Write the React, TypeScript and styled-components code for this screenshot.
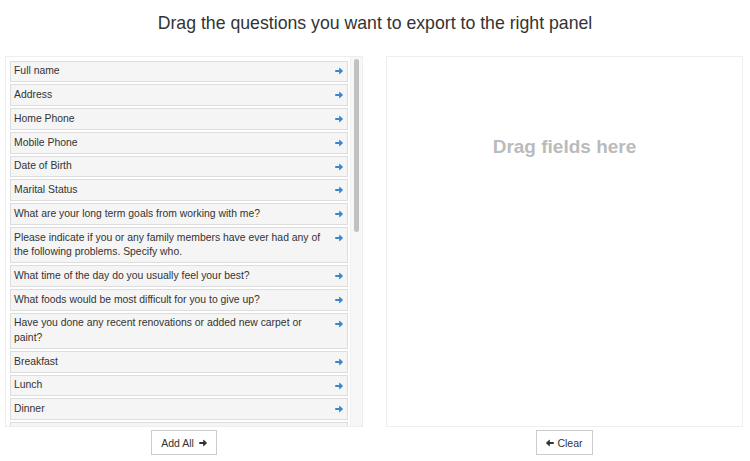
import styled, { createGlobalStyle } from 'styled-components';

const questions = [
	'Full name',
	'Address',
	'Home Phone',
	'Mobile Phone',
	'Date of Birth',
	'Marital Status',
	'What are your long term goals from working with me?',
	'Please indicate if you or any family members have ever had any of the following problems. Specify who.',
	'What time of the day do you usually feel your best?',
	'What foods would be most difficult for you to give up?',
	'Have you done any recent renovations or added new carpet or paint?',
	'Breakfast',
	'Lunch',
	'Dinner',
	'Snacks',
	'Beverages',
	'Do you smoke?',
	'How many hours do you sleep per night?',
	'Exercise routine',
	'Current medications',
	'Allergies',
];

function Arrow({ left = false }: { left?: boolean }) {
	return (
		<ArrowSvg viewBox="0 0 10 10" $left={left}>
			<path d="M0.3 3.7H5.2V1.2Q5.2 0.6 5.8 1L9.6 4.5Q10 5 9.6 5.5L5.8 9Q5.2 9.4 5.2 8.8V6.3H0.3Z" fill="currentColor" />
		</ArrowSvg>
	);
}

function App() {
	return (
		<>
			<GlobalStyle />
			<Page>
				<Title>Drag the questions you want to export to the right panel</Title>
				<Columns>
					<Column>
						<SourcePanel>
							<List>
								{questions.map((q) => (
									<Question key={q}>
										<span>{q}</span>
										<MoveIcon>
											<Arrow />
										</MoveIcon>
									</Question>
								))}
							</List>
							<ScrollTrack>
								<ScrollThumb />
							</ScrollTrack>
						</SourcePanel>
						<ActionButton $gap={5}>
							Add All <Arrow />
						</ActionButton>
					</Column>
					<Column>
						<DropPanel>
							<Placeholder>Drag fields here</Placeholder>
						</DropPanel>
						<ActionButton $gap={3}>
							<Arrow left /> Clear
						</ActionButton>
					</Column>
				</Columns>
			</Page>
		</>
	);
}

export default App;

const GlobalStyle = createGlobalStyle`
	body {
		margin: 0;
		background: #fff;
		font-family: "Liberation Sans", Arial, sans-serif;
		color: #333;
	}
`;

const Page = styled.div`
	width: 750px;
	height: 461px;
	overflow: hidden;
`;

const Title = styled.h1`
	margin: 0;
	height: 56px;
	padding-top: 12px;
	box-sizing: border-box;
	text-align: center;
	font-size: 17.7px;
	font-weight: normal;
	line-height: 22px;
	color: #333;
`;

const Columns = styled.div`
	display: grid;
	grid-template-columns: 358px 357px;
	gap: 23px;
	padding-left: 5px;
`;

const Column = styled.div`
	display: flex;
	flex-direction: column;
	align-items: center;
	gap: 3px;
`;

const SourcePanel = styled.div`
	display: flex;
	width: 358px;
	height: 371px;
	box-sizing: border-box;
	border: 1px solid #eee;
`;

const List = styled.div`
	flex: 1;
	overflow: hidden;
	padding: 3.5px 2px 3px 4px;
`;

const ScrollTrack = styled.div`
	flex: none;
	width: 12px;
	box-sizing: border-box;
	padding: 2px 3px;
	background: #f7f7f7;
	border-left: 1px solid #f0f0f0;
`;

const ScrollThumb = styled.div`
	height: 173px;
	border-radius: 4px;
	background: #c1c1c1;
`;

const Question = styled.div`
	display: flex;
	justify-content: space-between;
	align-items: flex-start;
	gap: 8px;
	padding: 2.7px 3px;
	margin-bottom: 2px;
	border: 1px solid #ddd;
	background: #f5f5f5;
	font-size: 10.4px;
	line-height: 14.4px;
	color: #333;
	cursor: move;
`;

const MoveIcon = styled.span`
	flex: none;
	display: flex;
	align-items: center;
	height: 14.4px;
	padding-right: 1px;
	color: #3a87d0;
`;

const ArrowSvg = styled.svg<{ $left: boolean }>`
	width: 8px;
	height: 8px;
	flex: none;
	transform: ${({ $left }) => ($left ? 'scaleX(-1)' : 'none')};
`;

const DropPanel = styled.div`
	width: 357px;
	height: 371px;
	box-sizing: border-box;
	border: 1px solid #eee;
	display: flex;
	justify-content: center;
	align-items: flex-start;
`;

const Placeholder = styled.div`
	margin-top: 79px;
	font-size: 19px;
	font-weight: bold;
	color: #bbb;
`;

const ActionButton = styled.button<{ $gap: number }>`
	display: inline-flex;
	align-items: center;
	gap: ${({ $gap }) => $gap}px;
	height: 25px;
	padding: 0 9px;
	border: 1px solid #ccc;
	border-radius: 0;
	background: #fff;
	font-family: "Liberation Sans", Arial, sans-serif;
	font-size: 10.5px;
	color: #333;
	cursor: pointer;
`;
